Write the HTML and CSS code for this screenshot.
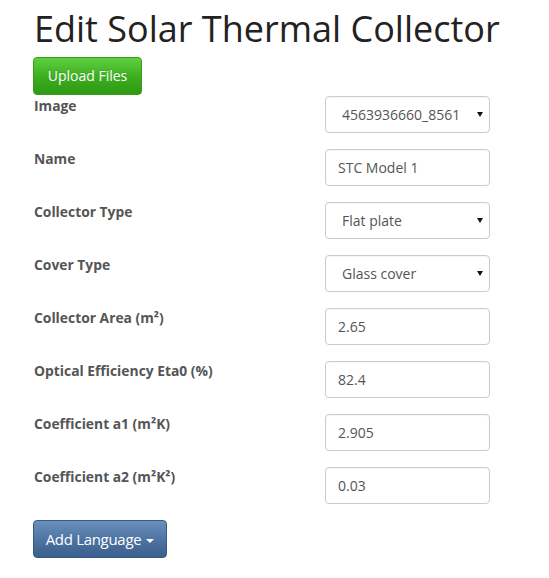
FILE: index.html
```html
<!DOCTYPE html>
<html>
<head>
<meta charset="utf-8">
<link rel="stylesheet" href="styles.css">
</head>
<body>
<div class="page">
  <h1 class="title">Edit Solar Thermal Collector</h1>
  <button class="btn btn-success">Upload Files</button>
  <form class="form">
    <div class="row">
      <label class="label">Image</label>
      <div class="select-wrap"><select class="control select"><option>4563936660_8561</option></select></div>
    </div>
    <div class="row">
      <label class="label">Name</label>
      <input class="control" type="text" value="STC Model 1">
    </div>
    <div class="row">
      <label class="label">Collector Type</label>
      <div class="select-wrap"><select class="control select"><option>Flat plate</option></select></div>
    </div>
    <div class="row">
      <label class="label">Cover Type</label>
      <div class="select-wrap"><select class="control select"><option>Glass cover</option></select></div>
    </div>
    <div class="row">
      <label class="label">Collector Area (m²)</label>
      <input class="control" type="text" value="2.65">
    </div>
    <div class="row">
      <label class="label">Optical Efficiency Eta0 (%)</label>
      <input class="control" type="text" value="82.4">
    </div>
    <div class="row">
      <label class="label">Coefficient a1 (m²K)</label>
      <input class="control" type="text" value="2.905">
    </div>
    <div class="row">
      <label class="label">Coefficient a2 (m²K²)</label>
      <input class="control" type="text" value="0.03">
    </div>
  </form>
  <button class="btn btn-primary">Add Language<span class="caret"></span></button>
</div>
</body>
</html>
```

FILE: styles.css
```css
html, body {
  margin: 0;
  padding: 0;
  background: #fff;
}
body {
  font-family: "Open Sans", "Liberation Sans", sans-serif;
  font-size: 14px;
  color: #555;
}
.page {
  padding: 9px 0 0 33px;
}
.title {
  margin: 0 0 8px 1px;
  font-size: 36px;
  font-weight: 400;
  line-height: 40px;
  color: #222;
}
.btn {
  display: inline-block;
  font-family: "Open Sans", "Liberation Sans", sans-serif;
  font-size: 14px;
  line-height: 20px;
  border-radius: 4px;
  color: #fff;
  cursor: pointer;
}
.btn-success {
  width: 109px;
  height: 38px;
  padding: 0;
  border: 1px solid #3a9a1e;
  background: linear-gradient(to bottom, #5fd03f 0%, #3cac1f 55%, #2d9a12 100%);
  text-shadow: 0 -1px 0 rgba(0,0,0,0.1);
}
.form {
  margin-top: 1px;
  width: 457px;
}
.row {
  display: flex;
  justify-content: space-between;
  align-items: flex-start;
  height: 37px;
  margin-bottom: 16px;
}
.label {
  font-weight: 700;
  font-size: 13.85px;
  line-height: 20px;
  padding: 0 0 0 1px;
  color: #555;
}
.control {
  box-sizing: border-box;
  width: 165px;
  height: 37px;
  margin: 0;
  padding: 0 12px;
  border: 1px solid #ccc;
  border-radius: 4px;
  font-family: "Open Sans", "Liberation Sans", sans-serif;
  font-size: 14px;
  color: #555;
  background: #fff;
  box-shadow: inset 0 1px 1px rgba(0,0,0,0.04);
  outline: none;
}
.select-wrap {
  position: relative;
  width: 165px;
  height: 37px;
}
.select {
  appearance: none;
  -webkit-appearance: none;
  padding-left: 16px;
}
.select-wrap::after {
  content: "";
  position: absolute;
  right: 7px;
  top: 16px;
  border-left: 3px solid transparent;
  border-right: 3px solid transparent;
  border-top: 5px solid #111;
  pointer-events: none;
}
.btn-primary {
  width: 134px;
  height: 38px;
  padding: 0;
  margin-top: 0;
  border: 1px solid #375a84;
  background: linear-gradient(to bottom, #6b90bb 0%, #4c72a0 55%, #3b5f8d 100%);
  font-size: 15px;
  letter-spacing: -0.3px;
}
.caret {
  display: inline-block;
  vertical-align: middle;
  margin-left: 5px;
  border-left: 4px solid transparent;
  border-right: 4px solid transparent;
  border-top: 4px solid #fff;
}
```
